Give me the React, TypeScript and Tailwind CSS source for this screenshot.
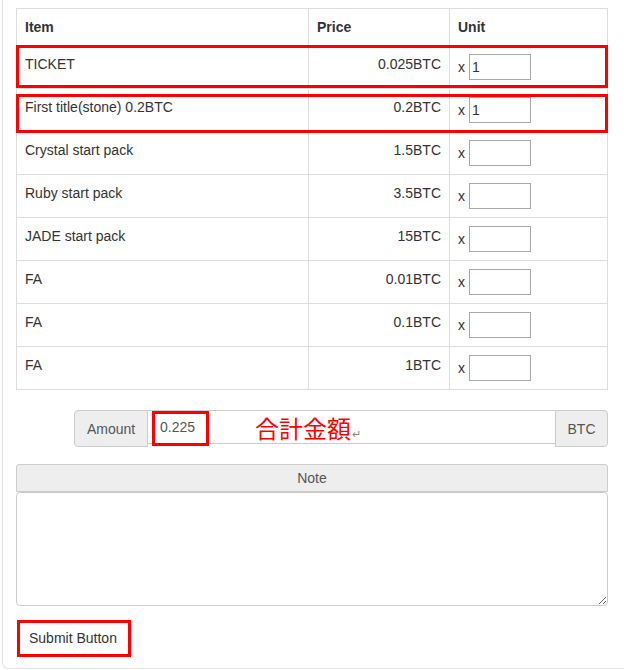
import React from "react";

type Product = {
  name: string;
  price: string;
  qty: string;
};

const products: Product[] = [
  { name: "TICKET", price: "0.025BTC", qty: "1" },
  { name: "First title(stone) 0.2BTC", price: "0.2BTC", qty: "1" },
  { name: "Crystal start pack", price: "1.5BTC", qty: "" },
  { name: "Ruby start pack", price: "3.5BTC", qty: "" },
  { name: "JADE start pack", price: "15BTC", qty: "" },
  { name: "FA", price: "0.01BTC", qty: "" },
  { name: "FA", price: "0.1BTC", qty: "" },
  { name: "FA", price: "1BTC", qty: "" },
];

const cols = "grid grid-cols-[292px_141px_158px]";

function ProductRow({ p }: { p: Product }) {
  return (
    <div className={cols}>
      <div className="h-[43px] border-r border-b border-[#ddd] px-[8px] pt-[8px] leading-[20px]">{p.name}</div>
      <div className="h-[43px] border-r border-b border-[#ddd] px-[8px] pt-[8px] text-right leading-[20px]">{p.price}</div>
      <div className="flex h-[43px] items-baseline gap-[4px] border-r border-b border-[#ddd] px-[8px] pt-[8px]">
        <span>x</span>
        <input
          defaultValue={p.qty}
          className="h-[26px] w-[62px] border border-[#a9a9a9] bg-white px-[2px] text-[14px] leading-[20px] text-[#333] outline-none"
        />
      </div>
    </div>
  );
}

export default function App() {
  return (
    <div className="h-[670px] overflow-hidden bg-white font-['Liberation_Sans',Arial,sans-serif] text-[14px] text-[#333]">
      <div className="ml-[2px] rounded-bl-[6px] border-b border-l border-[#e3e3e3] pt-[8px] pr-[16px] pb-[11px] pl-[13px]">
        {/* order table */}
        <div className="relative w-[592px] border-t border-l border-[#ddd]">
          <div className={cols}>
            <div className="h-[37px] border-r border-b border-[#ddd] px-[8px] pt-[8px] font-bold leading-[20px]">Item</div>
            <div className="h-[37px] border-r border-b border-[#ddd] px-[8px] pt-[8px] font-bold leading-[20px]">Price</div>
            <div className="h-[37px] border-r border-b border-[#ddd] px-[8px] pt-[8px] font-bold leading-[20px]">Unit</div>
          </div>
          {products.map((p, i) => (
            <ProductRow key={i} p={p} />
          ))}
          <div className="pointer-events-none absolute top-[36px] left-[-1px] h-[43px] w-[592px] border-[3px] border-[#f00]" />
          <div className="pointer-events-none absolute top-[85px] left-[-1px] h-[39px] w-[592px] border-[3px] border-[#f00]" />
        </div>

        {/* total amount */}
        <div className="mt-[20px] flex items-start pl-[58px]">
          <div className="flex h-[37px] w-[74px] items-center justify-center rounded-l-[4px] border border-[#ccc] bg-[#eee] pt-[1px] text-[#555]">
            Amount
          </div>
          <div className="relative h-[34px] w-[407px] border-y border-[#ccc] bg-white">
            <input
              readOnly
              value="0.225"
              className="h-full w-full bg-transparent pl-[12px] text-[14px] text-[#555] outline-none"
            />
            <div className="pointer-events-none absolute top-[0px] left-[4px] h-[35px] w-[57px] border-[3px] border-[#f00]" />
            <span className="pointer-events-none absolute top-[2px] left-[107px] font-['Noto_Sans_CJK_JP',sans-serif] text-[24px] leading-[30px] text-[#f00]">
              合計金額
              <span className="ml-[1px] text-[11px] text-[#888]">↵</span>
            </span>
          </div>
          <div className="flex h-[37px] w-[53px] items-center justify-center rounded-r-[4px] border border-[#ccc] bg-[#eee] pt-[1px] text-[#555]">
            BTC
          </div>
        </div>

        {/* note */}
        <div className="mt-[17px] w-[592px]">
          <div className="flex h-[28px] items-center justify-center rounded-t-[3px] border border-[#ccc] bg-[#eee] text-[#555]">
            Note
          </div>
          <textarea className="block h-[114px] w-full rounded-[4px] border border-[#ccc] bg-white p-[6px] text-[14px] outline-none" />
        </div>

        <button className="mt-[14px] ml-[1px] h-[37px] w-[114px] border-[3px] border-[#f00] bg-white pl-[9px] text-left text-[14px] text-[#333]">
          Submit Button
        </button>
      </div>
    </div>
  );
}
